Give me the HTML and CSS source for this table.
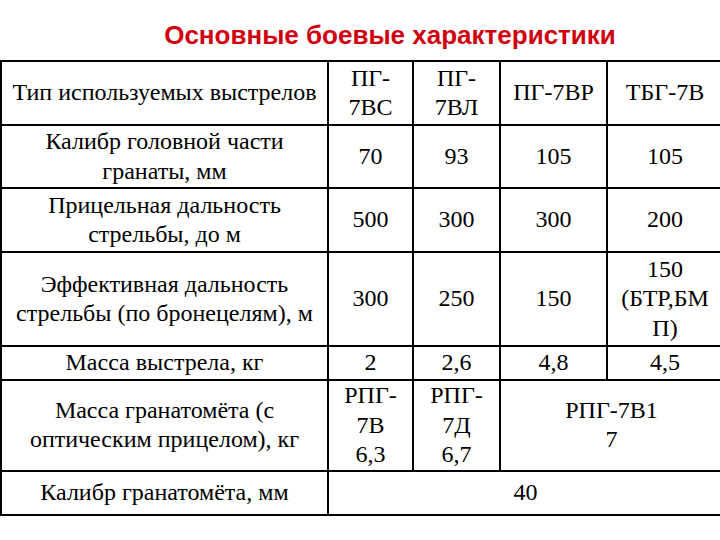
FILE: index.html
```html
<!DOCTYPE html>
<html>
<head>
<meta charset="utf-8">
<title>Основные боевые характеристики</title>
<link rel="stylesheet" href="styles.css">
</head>
<body>
<div class="page">
  <h1 class="title">Основные боевые характеристики</h1>
  <table class="specs">
    <colgroup>
      <col class="c-name">
      <col class="c-a">
      <col class="c-b">
      <col class="c-c">
      <col class="c-d">
    </colgroup>
    <tbody>
      <tr class="r1">
        <td>Тип используемых выстрелов</td>
        <td>ПГ-<br>7ВС</td>
        <td>ПГ-<br>7ВЛ</td>
        <td>ПГ-7ВР</td>
        <td>ТБГ-7В</td>
      </tr>
      <tr class="r2">
        <td>Калибр головной части<br>гранаты, мм</td>
        <td>70</td>
        <td>93</td>
        <td>105</td>
        <td>105</td>
      </tr>
      <tr class="r3">
        <td>Прицельная дальность<br>стрельбы, до м</td>
        <td>500</td>
        <td>300</td>
        <td>300</td>
        <td>200</td>
      </tr>
      <tr class="r4">
        <td>Эффективная дальность<br>стрельбы (по бронецелям), м</td>
        <td>300</td>
        <td>250</td>
        <td>150</td>
        <td>150<br>(БТР,БМ<br>П)</td>
      </tr>
      <tr class="r5">
        <td>Масса выстрела, кг</td>
        <td>2</td>
        <td>2,6</td>
        <td>4,8</td>
        <td>4,5</td>
      </tr>
      <tr class="r6">
        <td>Масса гранатомёта (с<br>оптическим прицелом), кг</td>
        <td>РПГ-<br>7В<br>6,3</td>
        <td>РПГ-<br>7Д<br>6,7</td>
        <td colspan="2">РПГ-7В1<br>7</td>
      </tr>
      <tr class="r7">
        <td>Калибр гранатомёта, мм</td>
        <td colspan="4">40</td>
      </tr>
    </tbody>
  </table>
</div>
</body>
</html>
```

FILE: styles.css
```css
html, body {
  margin: 0;
  padding: 0;
  background: #ffffff;
}

.page {
  width: 720px;
  height: 540px;
  overflow: hidden;
}

.title {
  margin: 0;
  height: 60px;
  box-sizing: border-box;
  padding: 20px 0 0 60px;
  text-align: center;
  font-family: "Liberation Sans", Arial, sans-serif;
  font-weight: bold;
  font-size: 26px;
  line-height: 30px;
  color: #d0000f;
}

.specs {
  border-collapse: collapse;
  table-layout: fixed;
  width: 722px;
  margin-left: 0;
  font-family: "Liberation Serif", "Times New Roman", serif;
  font-size: 24px;
  line-height: 29.5px;
  color: #000000;
}

.c-name { width: 327px; }
.c-a { width: 85px; }
.c-b { width: 87px; }
.c-c { width: 107px; }
.c-d { width: 116px; }

.specs td {
  border: 2px solid #000000;
  padding: 0;
  text-align: center;
  vertical-align: middle;
}

.r1 { height: 64px; }
.r2 { height: 63px; }
.r3 { height: 64px; }
.r4 { height: 94px; }
.r5 { height: 34px; }
.r6 { height: 83px; }
.r7 { height: 44px; }
```
